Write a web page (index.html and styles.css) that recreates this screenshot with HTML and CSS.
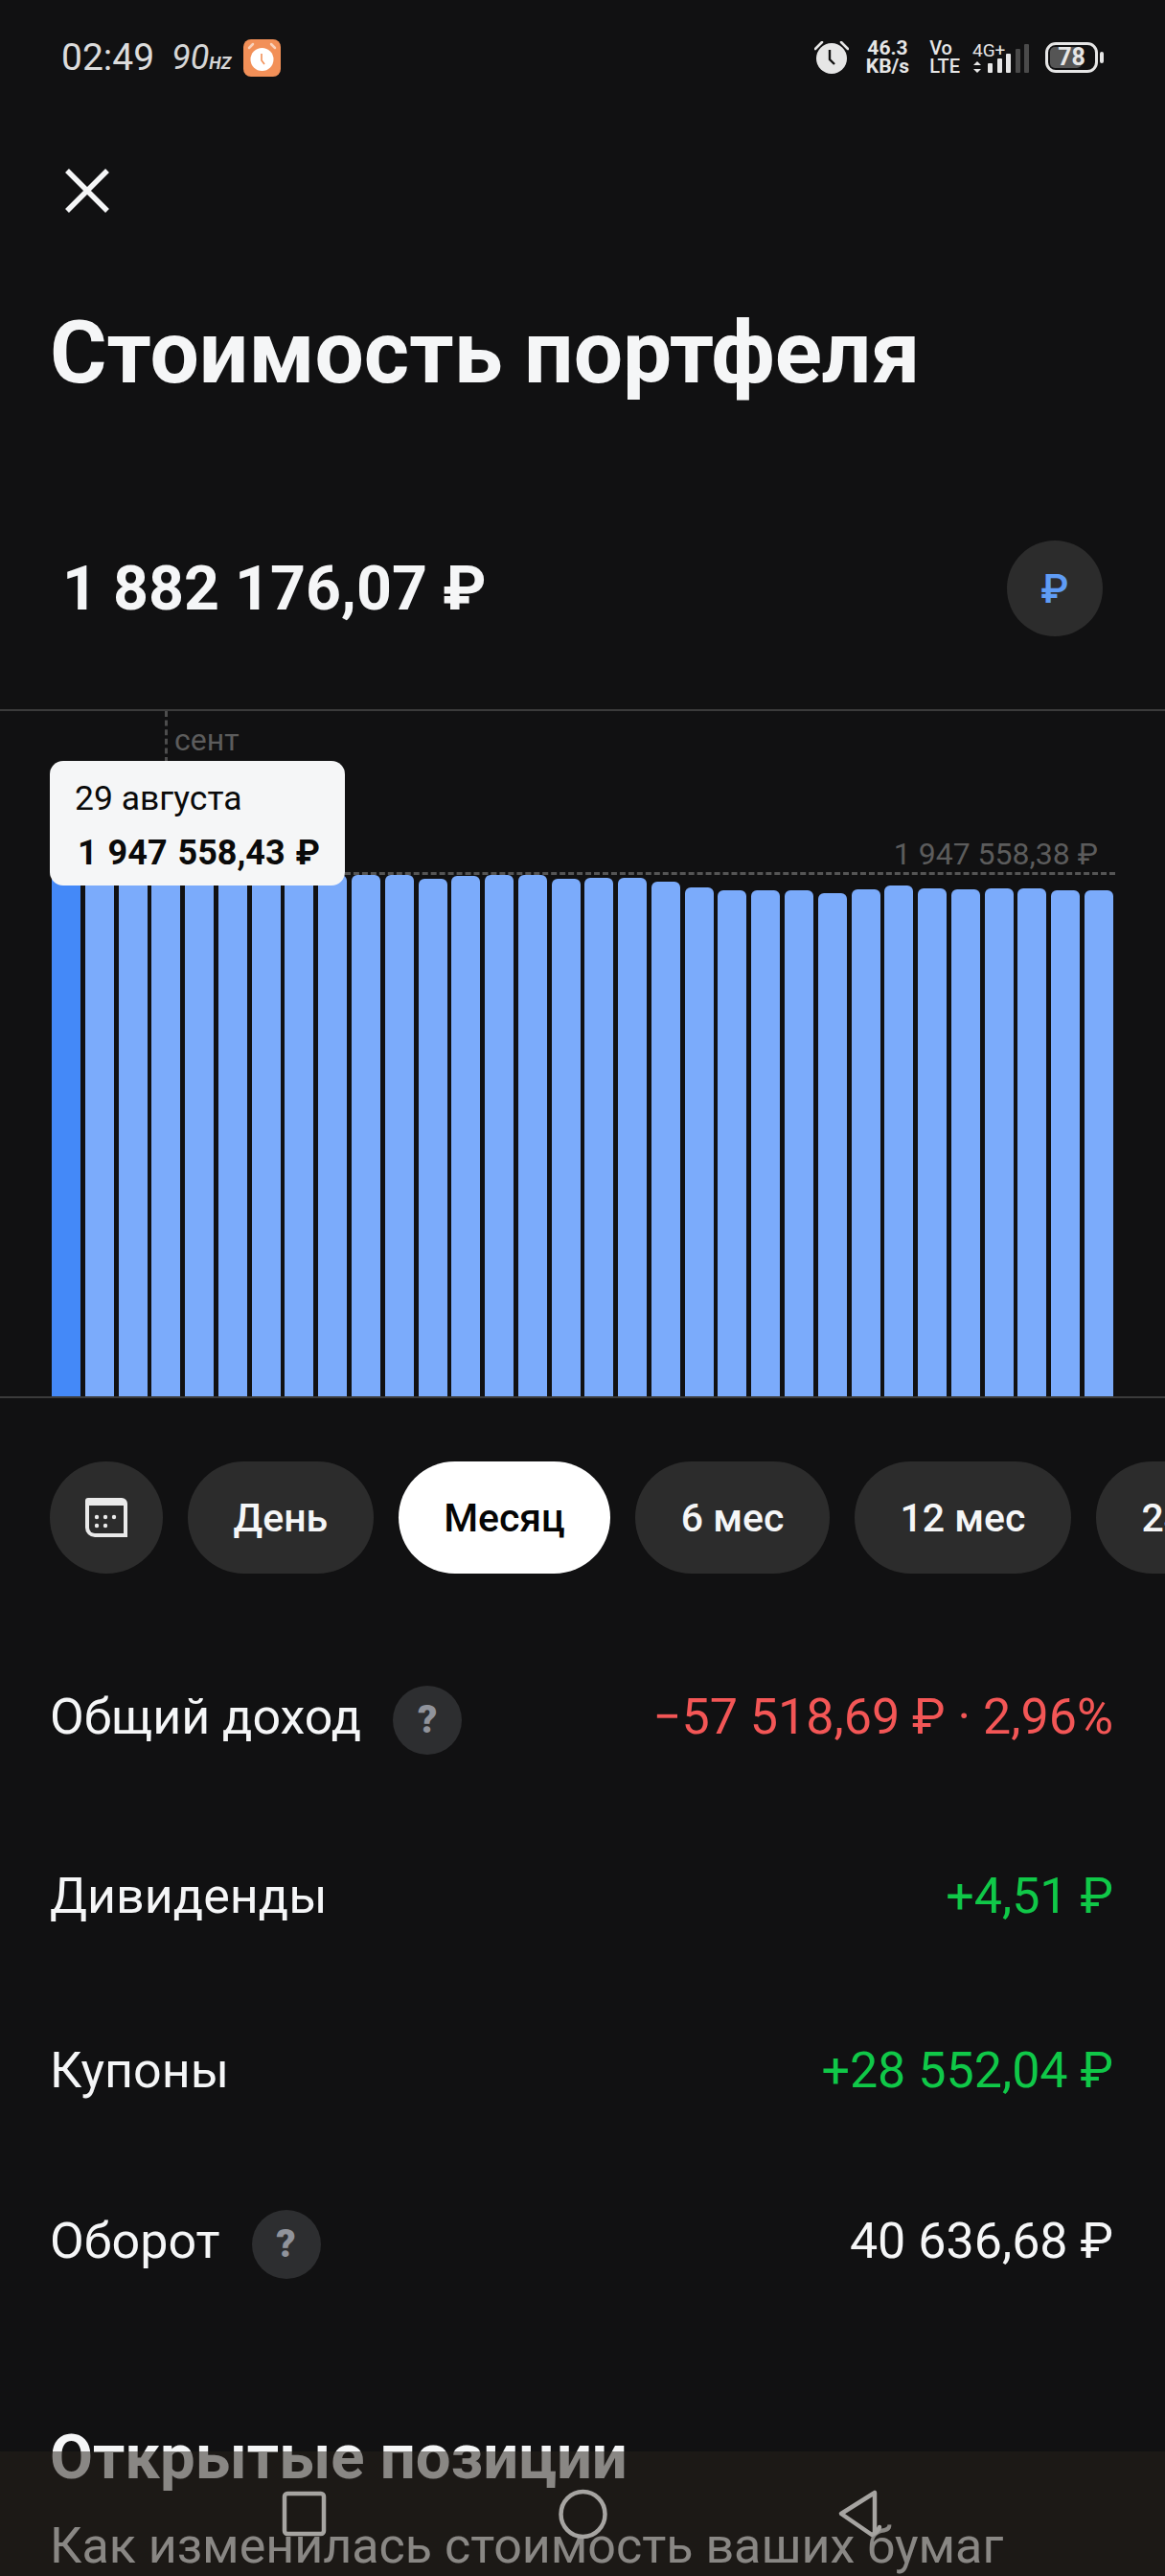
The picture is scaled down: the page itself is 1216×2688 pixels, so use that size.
FILE: index.html
```html
<!DOCTYPE html>
<html lang="ru">
<head>
<meta charset="utf-8">
<title>Стоимость портфеля</title>
<link rel="stylesheet" href="styles.css">
</head>
<body>
<div class="screen">
  <header class="status">
    <div class="status-left">
      <span class="time">02:49</span>
      <span class="hz">90<small>Hz</small></span>
      <span class="alarm-tile">
        <svg viewBox="0 0 39 39" width="39" height="39"><circle cx="19.5" cy="21" r="12" fill="#fff"/><path d="M6 9 10 5M33 9 29 5" stroke="#fff" stroke-width="2.5" stroke-linecap="round" opacity=".6"/><path d="M19 15v7l3 4" fill="none" stroke="#f29058" stroke-width="1.6"/></svg>
      </span>
    </div>
    <div class="status-right">
      <svg class="st-alarm" viewBox="0 0 36 34" width="36" height="34"><circle cx="18" cy="18" r="16" fill="#e6e6e6"/><path d="M1 8 8 1M35 8 28 1" stroke="#e6e6e6" stroke-width="2.6" stroke-linecap="round"/><path d="M16 9v10l5 5" fill="none" stroke="#111" stroke-width="2.4"/></svg>
      <span class="st-pair st-speed"><span>46.3</span><span>KB/s</span></span>
      <span class="st-pair st-volte"><span>Vo</span><span>LTE</span></span>
      <span class="st-net">
        <span class="st-4g">4G+</span>
        <svg viewBox="0 0 59 31" width="59" height="31"><path d="M5 18 9 22H1ZM5 30 1 26H9Z" fill="#e6e6e6"/><g fill="#e6e6e6"><rect x="16" y="20" width="5" height="10" rx="1"/><rect x="26" y="15" width="5" height="15" rx="1"/><rect x="35" y="10" width="5" height="20" rx="1"/></g><g fill="#4a4a4a"><rect x="45" y="5" width="5" height="25" rx="1"/><rect x="54" y="0" width="5" height="30" rx="1"/></g></svg>
      </span>
      <span class="battery"><span class="battery-fill"></span><span class="battery-num">78</span></span>
      <span class="battery-nub"></span>
    </div>
  </header>

  <div class="close">
    <svg viewBox="0 0 46 46" width="46" height="46"><path d="M2 2 44 44M44 2 2 44" stroke="#f5f6f7" stroke-width="5.5"/></svg>
  </div>

  <h1 class="title">Стоимость портфеля</h1>

  <section class="summary">
    <div class="amount">1 882 176,07 ₽</div>
    <div class="currency">₽</div>
  </section>

  <section class="chart">
    <div class="month-line"></div>
    <div class="month">сент</div>
    <div class="max-label">1 947 558,38 ₽</div>
    <div class="max-line"></div>
    <div class="bars">
      <i class="bar bar-active" style="height:545px"></i>
      <i class="bar" style="height:545px"></i>
      <i class="bar" style="height:545px"></i>
      <i class="bar" style="height:545px"></i>
      <i class="bar" style="height:545px"></i>
      <i class="bar" style="height:545px"></i>
      <i class="bar" style="height:545px"></i>
      <i class="bar" style="height:545px"></i>
      <i class="bar" style="height:544px"></i>
      <i class="bar" style="height:544px"></i>
      <i class="bar" style="height:544px"></i>
      <i class="bar" style="height:540px"></i>
      <i class="bar" style="height:543px"></i>
      <i class="bar" style="height:544px"></i>
      <i class="bar" style="height:544px"></i>
      <i class="bar" style="height:540px"></i>
      <i class="bar" style="height:541px"></i>
      <i class="bar" style="height:541px"></i>
      <i class="bar" style="height:537px"></i>
      <i class="bar" style="height:531px"></i>
      <i class="bar" style="height:528px"></i>
      <i class="bar" style="height:528px"></i>
      <i class="bar" style="height:528px"></i>
      <i class="bar" style="height:525px"></i>
      <i class="bar" style="height:529px"></i>
      <i class="bar" style="height:533px"></i>
      <i class="bar" style="height:530px"></i>
      <i class="bar" style="height:529px"></i>
      <i class="bar" style="height:530px"></i>
      <i class="bar" style="height:530px"></i>
      <i class="bar" style="height:528px"></i>
      <i class="bar" style="height:528px"></i>
    </div>
    <div class="tip">
      <div class="tip-date">29 августа</div>
      <div class="tip-value">1 947 558,43 ₽</div>
    </div>
  </section>

  <nav class="chips">
    <span class="chip chip-icon">
      <svg viewBox="0 0 44 41" width="44" height="41"><path d="M0 3a3 3 0 0 1 3-3H38a6 6 0 0 1 6 6V41H10A10 10 0 0 1 0 31Z" fill="#eaeaea"/><path d="M4 8H40V37H10A6 6 0 0 1 4 31Z" fill="#2c2c2c"/><g fill="#eaeaea"><circle cx="12" cy="20" r="2.2"/><circle cx="21" cy="20" r="2.2"/><circle cx="30" cy="20" r="2.2"/><circle cx="12" cy="29" r="2.2"/><circle cx="21" cy="29" r="2.2"/></g></svg>
    </span>
    <span class="chip">День</span>
    <span class="chip chip-on">Месяц</span>
    <span class="chip">6 мес</span>
    <span class="chip">12 мес</span>
    <span class="chip">24 мес</span>
  </nav>

  <section class="stats">
    <div class="row">
      <div class="row-label"><span>Общий доход</span><span class="help">?</span></div>
      <div class="row-value neg">−57 518,69 ₽ · 2,96%</div>
    </div>
    <div class="row">
      <div class="row-label"><span>Дивиденды</span></div>
      <div class="row-value pos">+4,51 ₽</div>
    </div>
    <div class="row">
      <div class="row-label"><span>Купоны</span></div>
      <div class="row-value pos">+28 552,04 ₽</div>
    </div>
    <div class="row">
      <div class="row-label"><span>Оборот</span><span class="help">?</span></div>
      <div class="row-value">40 636,68 ₽</div>
    </div>
  </section>

  <section class="positions">
    <h2 class="pos-title">Открытые позиции</h2>
    <p class="pos-sub">Как изменилась стоимость ваших бумаг</p>
  </section>

  <div class="navbar">
    <svg viewBox="0 0 1216 130" width="1216" height="130">
      <g fill="none" stroke="#a6a4a1" stroke-width="4.5" stroke-linejoin="round" stroke-linecap="round">
        <rect x="297" y="44" width="41" height="42" rx="3"/>
        <ellipse cx="608.500" cy="65.500" rx="23" ry="23.500"/>
        <path d="M913 43 878 65 910 87C914 85 917 83 918 79M913 43V84"/>
      </g>
    </svg>
  </div>
</div>
</body>
</html>
```

FILE: styles.css
```css
* { box-sizing: border-box; }
html, body { margin: 0; padding: 0; background: #111; }
.screen {
  position: relative;
  width: 1216px;
  height: 2688px;
  overflow: hidden;
  background: #111112;
  color: #f5f6f7;
  font-family: Roboto, "Liberation Sans", sans-serif;
}

/* status bar */
.status { height: 120px; display: flex; align-items: center; justify-content: space-between; padding: 0 64px 0 64px; }
.status-left { display: flex; align-items: center; }
.time { font-size: 39px; color: #dcdcdc; line-height: 1; }
.hz { margin-left: 18px; font-size: 36px; font-style: italic; font-weight: 400; color: #d6d6d6; line-height: 1; width: 61px; white-space: nowrap; }
.hz small { font-size: 18px; font-weight: 700; text-transform: uppercase; }
.alarm-tile { margin-left: 14px; width: 39px; height: 39px; border-radius: 8px; background: #f29058; display: block; }
.alarm-tile svg, .st-alarm, .close svg { display: block; }
.status-right { display: flex; align-items: center; color: #e6e6e6; }
.st-pair { display: flex; flex-direction: column; font-size: 21px; font-weight: 700; line-height: 19px; align-items: center; margin-left: 18px; }
.st-volte { margin-left: 21px; align-items: flex-start; font-weight: 500; font-size: 20px; }
.st-net { position: relative; margin-left: 13px; width: 59px; height: 31px; margin-top: 2px; }
.st-net svg { display: block; }
.st-4g { position: absolute; left: 0; top: -3px; font-size: 19px; font-weight: 400; line-height: 1; }
.battery { position: relative; display: block; margin-left: 17px; width: 55px; height: 32px; border: 3px solid #e6e6e6; border-radius: 11px; }
.battery-fill { position: absolute; left: 2px; top: 2px; bottom: 2px; width: 33px; background: #555; border-radius: 5px; }
.battery-num { position: absolute; left: 0; right: 0; top: 0; text-align: center; font-size: 25px; font-weight: 700; line-height: 26px; }
.battery-nub { display: block; margin-left: 2px; width: 4px; height: 12px; background: #e6e6e6; border-radius: 2px; }

/* header */
.close { margin-top: 56px; padding-left: 68px; height: 46px; }
.title { margin: 96px 0 0; padding-left: 52px; font-size: 91px; line-height: 100px; font-weight: 700; white-space: nowrap; }

.summary { margin-top: 146px; height: 100px; display: flex; align-items: center; justify-content: space-between; padding: 0 65px 0 65px; }
.amount { font-size: 64.500px; font-weight: 700; white-space: nowrap; }
.currency { width: 100px; height: 100px; border-radius: 50%; background: #2c2c2c; color: #5f9cf5; font-size: 42px; font-weight: 500; display: flex; align-items: center; justify-content: center; }

/* chart */
.chart { position: relative; margin-top: 76px; height: 719px; border-top: 2px solid #3b3b3b; border-bottom: 2px solid #3b3b3b; }
.bars { position: absolute; left: 54px; right: 54px; bottom: 0; height: 600px; display: grid; grid-template-columns: repeat(32, 1fr); column-gap: 4.8px; align-items: end; }
.bar { display: block; background: #7babfb; border-radius: 6px 6px 0 0; }
.bar-active { background: #4489f8; }
.month-line { position: absolute; left: 172px; top: 0; height: 54px; border-left: 3px dashed #4d4d4d; }
.month { position: absolute; left: 182px; top: 8px; font-size: 32px; line-height: 44px; color: #5c5c5c; }
.max-label { position: absolute; right: 70px; top: 127px; font-size: 32px; line-height: 44px; color: #5c5c5c; white-space: nowrap; }
.max-line { position: absolute; left: 360px; right: 52px; top: 168px; border-top: 3px dashed #555; }
.tip { position: absolute; left: 52px; top: 52px; width: 308px; height: 130px; border-radius: 14px; background: #f5f6f7; color: #0a0a0a; padding: 17px 0 0 26px; }
.tip-date { font-size: 35.500px; line-height: 44px; }
.tip-value { font-size: 36px; font-weight: 700; line-height: 44px; margin: 13px 0 0 3px; white-space: nowrap; word-spacing: 2px; }

/* chips */
.chips { margin-top: 66px; padding-left: 52px; display: flex; gap: 26px; height: 117px; }
.chip { flex: none; height: 117px; padding: 0 47.500px; border-radius: 59px; background: #2c2c2c; font-size: 41px; font-weight: 500; display: flex; align-items: center; white-space: nowrap; }
.chip-icon { width: 118px; padding: 0; justify-content: center; }
.chip-on { background: #fff; color: #050505; }

/* stats */
.stats { margin-top: 113px; padding: 0 54px 0 52px; display: flex; flex-direction: column; }
.row { height: 72px; display: flex; align-items: center; justify-content: space-between; font-size: 52px; }
.row:nth-child(2) { margin-top: 115px; }
.row:nth-child(3) { margin-top: 110px; }
.row:nth-child(4) { margin-top: 106px; }
.row-label { display: flex; align-items: center; gap: 33px; }
.row-value { white-space: nowrap; }
.help { width: 72px; height: 72px; border-radius: 50%; background: #2d2e30; color: #90939b; font-size: 40px; font-weight: 900; display: flex; align-items: center; justify-content: center; margin-top: 7px; }
.neg { color: #f35656; }
.pos { color: #10c848; }

/* positions */
.positions { margin-top: 152px; padding-left: 52px; }
.pos-title { margin: 0; font-size: 65.300px; line-height: 76px; font-weight: 700; white-space: nowrap; }
.pos-sub { margin: 25px 0 0; font-size: 52px; line-height: 60px; white-space: nowrap; }

/* system nav overlay */
.navbar { position: absolute; left: 0; right: 0; bottom: 0; height: 130px; background: rgba(38, 32, 27, .52); }
.navbar svg { display: block; }
```
